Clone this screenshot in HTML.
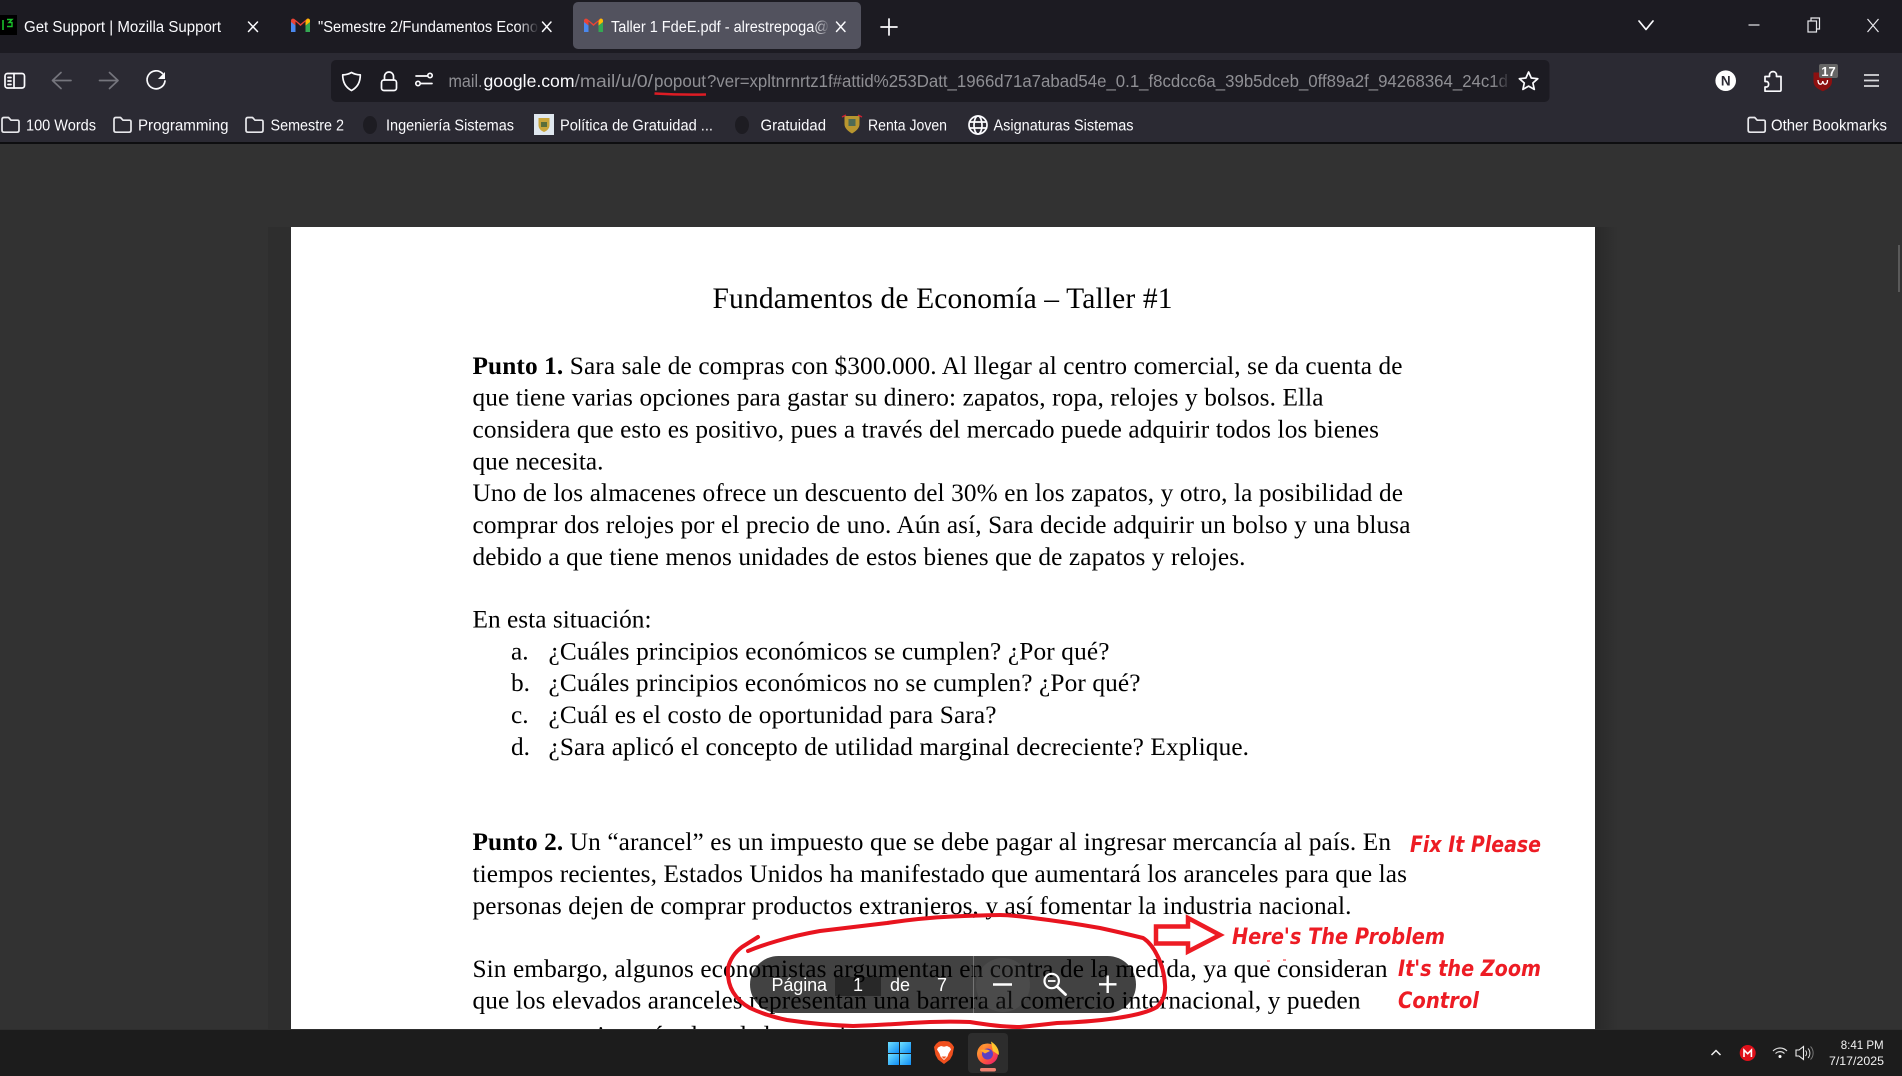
<!DOCTYPE html>
<html lang="es"><head><meta charset="utf-8"><title>Taller 1 FdeE.pdf</title>
<style>
html,body{margin:0;padding:0;width:1902px;height:1076px;overflow:hidden;background:#323232}
svg{display:block}
.ui{font-family:"Liberation Sans",sans-serif;font-size:15.5px;fill:#fbfbfe}
.b{font-family:"Liberation Serif",serif;font-size:25.3px;fill:#000}
.a{font-family:"DejaVu Sans",sans-serif;font-size:22.5px;font-weight:bold;font-style:italic;fill:#ed1c24}
.z{font-family:"Liberation Sans",sans-serif;font-size:18px;fill:#fff}
.i{fill:none;stroke:#fbfbfe;stroke-width:1.7;stroke-linecap:round;stroke-linejoin:round}
.f{fill:none;stroke:#e8e8ec;stroke-width:1.7;stroke-linejoin:round}
.u{font-family:"Liberation Sans",sans-serif;font-size:17.5px;fill:#8f8f94}
</style></head><body>
<svg width="1902" height="1076" viewBox="0 0 1902 1076" xmlns="http://www.w3.org/2000/svg">
<defs>
<linearGradient id="sh" x1="0" x2="1" y1="0" y2="0"><stop offset="0" stop-color="#292929"/><stop offset="1" stop-color="#323232"/></linearGradient>
<linearGradient id="fd1" x1="0" x2="1" y1="0" y2="0"><stop offset="0" stop-color="#1c1b22" stop-opacity="0"/><stop offset="1" stop-color="#1c1b22"/></linearGradient>
<linearGradient id="fd2" x1="0" x2="1" y1="0" y2="0"><stop offset="0" stop-color="#52525e" stop-opacity="0"/><stop offset="1" stop-color="#52525e"/></linearGradient>
<linearGradient id="win" x1="0" x2="1" y1="0" y2="1"><stop offset="0" stop-color="#6fe0ff"/><stop offset="1" stop-color="#0f8cf5"/></linearGradient>
<linearGradient id="ff" x1="0" x2="1" y1="0" y2="1"><stop offset="0" stop-color="#ffbd2e"/><stop offset=".55" stop-color="#ff5a3a"/><stop offset="1" stop-color="#e8127a"/></linearGradient>
</defs>

<!-- content background -->
<rect width="1902" height="1076" fill="#323232"/>
<rect x="1595" y="227" width="23" height="810" fill="url(#sh)"/>
<rect x="268" y="227" width="23" height="810" fill="#2e2e2e"/>
<rect x="291" y="227" width="1304" height="810" fill="#fff"/>
<rect x="1898" y="245" width="2" height="47" fill="#5a5a5a"/>

<!-- document text -->
<text class="b" x="712.5" y="308" textLength="460" style="font-size:29.5px">Fundamentos de Economía – Taller #1</text>
<text class="b" x="472.5" y="374" textLength="930"><tspan font-weight="bold">Punto 1.</tspan> Sara sale de compras con $300.000. Al llegar al centro comercial, se da cuenta de</text>
<text class="b" x="472.5" y="405.500" textLength="851">que tiene varias opciones para gastar su dinero: zapatos, ropa, relojes y bolsos. Ella</text>
<text class="b" x="472.5" y="437.5" textLength="906.5">considera que esto es positivo, pues a través del mercado puede adquirir todos los bienes</text>
<text class="b" x="472.5" y="469.5" textLength="131">que necesita.</text>
<text class="b" x="472.5" y="501" textLength="930.5">Uno de los almacenes ofrece un descuento del 30% en los zapatos, y otro, la posibilidad de</text>
<text class="b" x="472.5" y="533" textLength="938">comprar dos relojes por el precio de uno. Aún así, Sara decide adquirir un bolso y una blusa</text>
<text class="b" x="472.5" y="565" textLength="773">debido a que tiene menos unidades de estos bienes que de zapatos y relojes.</text>
<text class="b" x="472.5" y="627.5" textLength="179">En esta situación:</text>
<text class="b" x="511" y="659.5">a.</text><text class="b" x="548.500" y="659.5" textLength="561">¿Cuáles principios económicos se cumplen? ¿Por qué?</text>
<text class="b" x="511" y="691">b.</text><text class="b" x="548.500" y="691" textLength="592">¿Cuáles principios económicos no se cumplen? ¿Por qué?</text>
<text class="b" x="511" y="723">c.</text><text class="b" x="548.500" y="723" textLength="448">¿Cuál es el costo de oportunidad para Sara?</text>
<text class="b" x="511" y="755">d.</text><text class="b" x="548.500" y="755" textLength="700.500">¿Sara aplicó el concepto de utilidad marginal decreciente? Explique.</text>
<text class="b" x="472.5" y="850" textLength="918.5"><tspan font-weight="bold">Punto 2.</tspan> Un “arancel” es un impuesto que se debe pagar al ingresar mercancía al país. En</text>
<text class="b" x="472.5" y="882" textLength="934.5">tiempos recientes, Estados Unidos ha manifestado que aumentará los aranceles para que las</text>
<text class="b" x="472.5" y="914" textLength="879">personas dejen de comprar productos extranjeros, y así fomentar la industria nacional.</text>
<text class="b" x="472.5" y="977" textLength="915">Sin embargo, algunos economistas argumentan en contra de la medida, ya que consideran</text>
<text class="b" x="472.5" y="1008.5" textLength="888">que los elevados aranceles representan una barrera al comercio internacional, y pueden</text>
<text class="b" x="472.5" y="1043.500" textLength="426">generar precios más altos de los productos</text>

<!-- pdf zoom control -->
<rect x="750" y="956" width="386" height="57" rx="28.5" fill="#000" fill-opacity=".74"/>
<rect x="835" y="977" width="46" height="19" fill="#000" fill-opacity=".38"/>
<rect x="973" y="956" width="1" height="57" fill="#8a8a8a" fill-opacity=".7"/>
<circle cx="1003" cy="985" r="27" fill="#fff" fill-opacity=".05"/>
<text class="z" x="771.5" y="991" textLength="55.5">Página</text>
<text class="z" x="858" y="991" text-anchor="middle">1</text>
<text class="z" x="890" y="991" textLength="20">de</text>
<text class="z" x="942" y="991" text-anchor="middle">7</text>
<path d="M993 984.5H1012" stroke="#fff" stroke-width="2.4"/>
<circle cx="1051.7" cy="981" r="7.2" fill="none" stroke="#fff" stroke-width="2.2"/>
<path d="M1048 981h7.5" stroke="#fff" stroke-width="1.8"/>
<path d="M1057 986.5L1065.5 994.5" stroke="#fff" stroke-width="2.8" stroke-linecap="round"/>
<path d="M1099 984.3H1116.5M1107.7 975.5V993" stroke="#fff" stroke-width="2.4"/>

<!-- annotations -->
<path d="M758 937L742 947Q731 955 728 968Q727 982 733 992Q739 1002 750 1008Q767 1016 787 1020Q820 1025 853 1026Q882 1025 910 1023Q940 1021 970 1022Q1000 1027 1020 1027Q1040 1025 1057 1023Q1090 1022 1117 1018Q1145 1014 1157 1007Q1166 998 1165 985Q1164 968 1157 955Q1151 943 1143 938Q1123 933 1100 928Q1066 922 1033 918Q1010 915 1000 915Q975 915.500 953 916.500Q920 918 887 923Q853 927 820 931Q797 935 777 941Q760 946 748 951" fill="none" stroke="#e8141f" stroke-width="4" stroke-linecap="round" stroke-linejoin="round"/>
<path d="M1156 926.5H1188V918L1220 935L1188 951.5V943.5H1156Z" fill="none" stroke="#ed1c24" stroke-width="4.500"/>
<text class="a" x="1410" y="852" textLength="131" lengthAdjust="spacingAndGlyphs">Fix It Please</text>
<text class="a" x="1232" y="944" textLength="213" lengthAdjust="spacingAndGlyphs">Here's The Problem</text>
<text class="a" x="1398" y="976" textLength="143" lengthAdjust="spacingAndGlyphs">It's the Zoom</text>
<text class="a" x="1398" y="1008" textLength="81" lengthAdjust="spacingAndGlyphs">Control</text>
<path d="M1267 961h3M1283 960h3" stroke="#ed1c24" stroke-width="1"/>

<!-- tab bar -->
<rect width="1902" height="53" fill="#1c1b22"/>
<rect x="573" y="2" width="288" height="47" rx="5" fill="#52525e"/>
<rect x="0" y="15" width="17" height="20" fill="#000"/>
<path d="M3 20v10" stroke="#19c22c" stroke-width="1.6"/><path d="M7 19.5h5l-3 3h3v4h-5" fill="none" stroke="#19c22c" stroke-width="1.4"/>
<text class="ui" x="24" y="32" textLength="197" lengthAdjust="spacingAndGlyphs">Get Support | Mozilla Support</text>
<path d="M248.500 22l9 9.500M257.500 22l-9 9.500" fill="none" stroke="#fbfbfe" stroke-width="1.500" stroke-linecap="round"/>

<g transform="translate(291 18)">
<rect x="0" y="2" width="4.5" height="12" fill="#4a88ee"/><rect x="14.5" y="2" width="4.5" height="12" fill="#34a853"/>
<path d="M0 3Q0 0 3 .7L9.5 6 16 .7Q19 0 19 3V4L14.5 7.5V3.5L9.5 8 4.5 3.5V7.5L0 4Z" fill="#ea4335"/>
<path d="M14.5 3.5L16 .7Q19 0 19 3V4L14.5 7.5Z" fill="#fbbc04"/></g>
<text class="ui" x="318" y="32" textLength="220" lengthAdjust="spacingAndGlyphs">"Semestre 2/Fundamentos Econo</text>
<rect x="518" y="14" width="21" height="24" fill="url(#fd1)"/>
<path d="M542.500 22l8.500 9.500M551 22l-8.500 9.500" fill="none" stroke="#fbfbfe" stroke-width="1.500" stroke-linecap="round"/>

<g transform="translate(584 18)">
<rect x="0" y="2" width="4.5" height="12" fill="#4a88ee"/><rect x="14.5" y="2" width="4.5" height="12" fill="#34a853"/>
<path d="M0 3Q0 0 3 .7L9.5 6 16 .7Q19 0 19 3V4L14.5 7.5V3.5L9.5 8 4.5 3.5V7.5L0 4Z" fill="#ea4335"/>
<path d="M14.5 3.5L16 .7Q19 0 19 3V4L14.5 7.5Z" fill="#fbbc04"/></g>
<text class="ui" x="611" y="32" textLength="218" lengthAdjust="spacingAndGlyphs">Taller 1 FdeE.pdf - alrestrepoga@</text>
<rect x="814" y="14" width="16" height="24" fill="url(#fd2)"/>
<path d="M836.500 22l8.500 9.500M845 22l-8.500 9.500" fill="none" stroke="#fbfbfe" stroke-width="1.500" stroke-linecap="round"/>
<path d="M881 27h16M889 19v16" class="i"/>
<path d="M1639 21l7 8.500 7-8.500" class="i"/>
<path d="M1748.500 25h11" stroke="#e8e8ec" stroke-width="1.2"/>
<rect x="1808" y="21" width="8.5" height="11" fill="none" stroke="#e8e8ec" stroke-width="1.2"/><path d="M1811 21v-3h8.5v11h-3" fill="none" stroke="#e8e8ec" stroke-width="1.2"/>
<path d="M1867.500 19l11 13M1878.500 19l-11 13" fill="none" stroke="#e8e8ec" stroke-width="1.2"/>

<!-- toolbar -->
<rect y="53" width="1902" height="90" fill="#2b2a33"/>
<rect y="142" width="1902" height="2" fill="#0e0e10"/>
<rect x="5" y="73.5" width="19.5" height="14.5" rx="2.5" class="i"/><path d="M14 73.5V88M8 77.5h3M8 81h3M8 84.5h3" class="i"/>
<path d="M61 72.5L52.5 80.5 61 88.5M53 80.5H71" fill="none" stroke="#75757d" stroke-width="1.7" stroke-linecap="round" stroke-linejoin="round"/>
<path d="M109.5 72.5L118 80.5 109.5 88.5M117.5 80.5H99.5" fill="none" stroke="#75757d" stroke-width="1.7" stroke-linecap="round" stroke-linejoin="round"/>
<path d="M162.5 73.5A9 9 0 1 0 165 81" class="i"/><path d="M165 72v7h-7z" fill="#fbfbfe"/>

<rect x="331" y="60" width="1218.500" height="42" rx="5" fill="#1c1b22"/>
<path d="M351.5 72.5c3 1.8 6 2.3 8.8 2.4 0 7.5-2.8 12.5-8.8 15.6-6-3.1-8.8-8.1-8.8-15.6 2.8-.1 5.8-.6 8.8-2.4z" class="i"/>
<rect x="381.5" y="80" width="15" height="10.5" rx="2.5" class="i"/><path d="M384.5 80v-3.5a4.5 4.5 0 0 1 9 0V80" class="i"/>
<path d="M416 76h11M421 83.5h11" class="i"/><circle cx="430" cy="75.5" r="2.2" class="i"/><circle cx="418" cy="83.5" r="2.2" class="i"/>
<text class="u" x="448.5" y="87" textLength="34" lengthAdjust="spacingAndGlyphs">mail.</text>
<text class="u" x="483.500" y="87" style="fill:#fbfbfe" textLength="91" lengthAdjust="spacingAndGlyphs">google.com</text>
<text class="u" x="574.5" y="87" textLength="78.500" lengthAdjust="spacingAndGlyphs">/mail/u/0/</text>
<text class="u" x="654" y="87" textLength="52" lengthAdjust="spacingAndGlyphs">popout</text>
<text class="u" x="707" y="87" textLength="801" lengthAdjust="spacingAndGlyphs">?ver=xpltnrnrtz1f#attid%253Datt_1966d71a7abad54e_0.1_f8cdcc6a_39b5dceb_0ff89a2f_94268364_24c1d</text>
<rect x="1492" y="66" width="20" height="30" fill="url(#fd1)"/>
<path d="M654.5 93.500Q680 95 706 94.5" fill="none" stroke="#dd1c24" stroke-width="2.500"/>
<path d="M1528.600 72l2.7 6 6.5.7-4.9 4.3 1.4 6.4-5.7-3.3-5.7 3.3 1.4-6.4-4.9-4.3 6.5-.7z" class="i"/>

<circle cx="1725.7" cy="80.7" r="10.3" fill="#fff"/><text x="1725.7" y="85.6" text-anchor="middle" style="font:bold 13.5px 'Liberation Sans',sans-serif;fill:#2b2a33">N</text>
<path d="M1765 76.5h4.5v-1.5c0-4.5 7-4.5 7 0v1.5h4.5v13.5c0 .8-.5 1.2-1.2 1.2H1765v-4.2h1.5c2.8 0 2.8-5.5 0-5.5H1765z" class="i"/>
<path d="M1813.5 72.5h18.5v9c0 4.5-4 7.5-9.2 9.7-5.300-2.200-9.300-5.200-9.300-9.700z" fill="#8c1010"/>
<path d="M1818 80c0 5.500 4.500 5.500 4.800 1 .3 4.500 4.700 4.500 4.700-1" fill="none" stroke="#fff" stroke-width="1.300"/>
<rect x="1819" y="64" width="19" height="14" rx="2" fill="#666"/>
<text x="1828.500" y="76" text-anchor="middle" style="font:bold 13px 'Liberation Sans',sans-serif;fill:#fff">17</text>
<path d="M1864 75h15M1864 80.500h15M1864 86h15" fill="none" stroke="#d8d8dc" stroke-width="1.700"/>

<!-- bookmarks -->
<path d="M2 119.500q0-2 2-2h4.500l2.500 2.700h6.500q1.500 0 1.500 1.500v8.500q0 2-2 2H4q-2 0-2-2z" class="f"/>
<text class="ui" x="26" y="130.500" textLength="70" lengthAdjust="spacingAndGlyphs">100 Words</text>
<path d="M114 119.500q0-2 2-2h4.500l2.500 2.700h6.500q1.500 0 1.500 1.500v8.500q0 2-2 2H116q-2 0-2-2z" class="f"/>
<text class="ui" x="138" y="130.500" textLength="90.500" lengthAdjust="spacingAndGlyphs">Programming</text>
<path d="M246 119.500q0-2 2-2h4.500l2.500 2.700h6.500q1.500 0 1.500 1.500v8.500q0 2-2 2H248q-2 0-2-2z" class="f"/>
<text class="ui" x="270.500" y="130.500" textLength="73.500" lengthAdjust="spacingAndGlyphs">Semestre 2</text>
<ellipse cx="370" cy="125" rx="7" ry="9" fill="#1d1c22"/>
<text class="ui" x="386" y="130.500" textLength="128" lengthAdjust="spacingAndGlyphs">Ingeniería Sistemas</text>
<rect x="534" y="114" width="20" height="21" fill="#dfe7ee"/><path d="M538.500 118h11v7c0 4-3 6-5.500 7-2.500-1-5.500-3-5.500-7z" fill="#c9a53a"/><rect x="541" y="122" width="6" height="5" fill="#5a6e3a"/>
<text class="ui" x="560" y="130.500" textLength="153" lengthAdjust="spacingAndGlyphs">Política de Gratuidad ...</text>
<ellipse cx="742" cy="125" rx="7" ry="9" fill="#1d1c22"/>
<text class="ui" x="760.500" y="130.500" textLength="65.500" lengthAdjust="spacingAndGlyphs">Gratuidad</text>
<path d="M844.500 116h15v8c0 4.500-4 7.500-7.500 9.500-3.500-2-7.500-5-7.500-9.500z" fill="#b8962f"/><rect x="848.500" y="119" width="7" height="7" fill="#4d6a55"/><path d="M842 117l4-2M862 117l-4-2" stroke="#c23" stroke-width="1.500"/>
<text class="ui" x="868" y="130.500" textLength="79" lengthAdjust="spacingAndGlyphs">Renta Joven</text>
<circle cx="978" cy="125" r="9" class="i"/><ellipse cx="978" cy="125" rx="4" ry="9" class="i"/><path d="M969.500 122h17M969.500 128h17" class="i"/>
<text class="ui" x="993.500" y="130.500" textLength="140" lengthAdjust="spacingAndGlyphs">Asignaturas Sistemas</text>
<path d="M1748.200 119.500q0-2 2-2h4.500l2.500 2.700h6.500q1.500 0 1.500 1.500v8.500q0 2-2 2H1750.200q-2 0-2-2z" class="f"/>
<text class="ui" x="1771" y="130.500" textLength="116" lengthAdjust="spacingAndGlyphs">Other Bookmarks</text>

<!-- taskbar -->
<rect y="1029" width="1902" height="47" fill="#1c1c1c"/>
<rect y="1029" width="1902" height="1" fill="#2e2e2e"/>
<g fill="url(#win)"><rect x="888" y="1042" width="11" height="11"/><rect x="900" y="1042" width="11" height="11"/><rect x="888" y="1054" width="11" height="11"/><rect x="900" y="1054" width="11" height="11"/></g>
<path d="M936 1044l3-2.500 5-.5 5 .5 3 2.500 2 3-1.500 8-2.500 4.500-6 4.500-6-4.500-2.500-4.500-1.500-8z" fill="#f0501e"/>
<path d="M938 1047.500l3-1.500 3 .7 3-.7 3 1.500 1 2-2.500 4-1 3-3.500 3.500-3.500-3.500-1-3-2.500-4z" fill="#fff"/><path d="M941.500 1056.500h5l-2.500 2.500z" fill="#f0501e"/>
<rect x="968" y="1033" width="40" height="40" rx="4" fill="#2d2d2d"/>
<circle cx="987.500" cy="1054" r="10.500" fill="url(#ff)"/>
<path d="M991 1041.500c5 3 8.500 8 7.800 13.500l-6-4z" fill="#ffc52e"/>
<path d="M977.500 1051c.8-3 2.800-5.800 6-7-1 2-1 3 0 4z" fill="#ff8a2e"/>
<circle cx="987.500" cy="1054" r="5.500" fill="#5b3fc4"/>
<path d="M980.500 1050.500c3-1.500 7-1.500 9.500.5l-5 2.500z" fill="#ffab2e"/>
<rect x="980" y="1068" width="16" height="3.500" rx="1.700" fill="#f08070"/>

<path d="M1711.500 1055l4.500-4.500 4.500 4.500" fill="none" stroke="#eee" stroke-width="1.500"/>
<circle cx="1747.700" cy="1053" r="8" fill="#e0101a"/><path d="M1744 1057v-7l3.700 3.700 3.700-3.700v7" fill="none" stroke="#fff" stroke-width="1.600"/>
<path d="M1773 1051c4-4 10-4 14 0M1775.500 1053.500c2.600-2.500 6.400-2.500 9 0" fill="none" stroke="#ddd" stroke-width="1.200"/><circle cx="1780" cy="1056.500" r="1.500" fill="#fff"/>
<path d="M1796 1050h3l4.500-3.500v13l-4.500-3.500h-3z" fill="none" stroke="#eee" stroke-width="1.100"/><path d="M1805.500 1050.500c1.500 1.500 1.500 4 0 5.500M1808 1048.500c2.500 2.500 2.500 7 0 9.500" fill="none" stroke="#ddd" stroke-width="1"/><path d="M1810.500 1046.500c3.500 3.500 3.500 9.500 0 13" fill="none" stroke="#777" stroke-width="1"/>
<text x="1840.700" y="1049" textLength="43" lengthAdjust="spacingAndGlyphs" style="font:12px 'Liberation Sans',sans-serif;fill:#f2f2f2">8:41 PM</text>
<text x="1829" y="1065" textLength="55" lengthAdjust="spacingAndGlyphs" style="font:12px 'Liberation Sans',sans-serif;fill:#f2f2f2">7/17/2025</text>
</svg>
</body></html>
